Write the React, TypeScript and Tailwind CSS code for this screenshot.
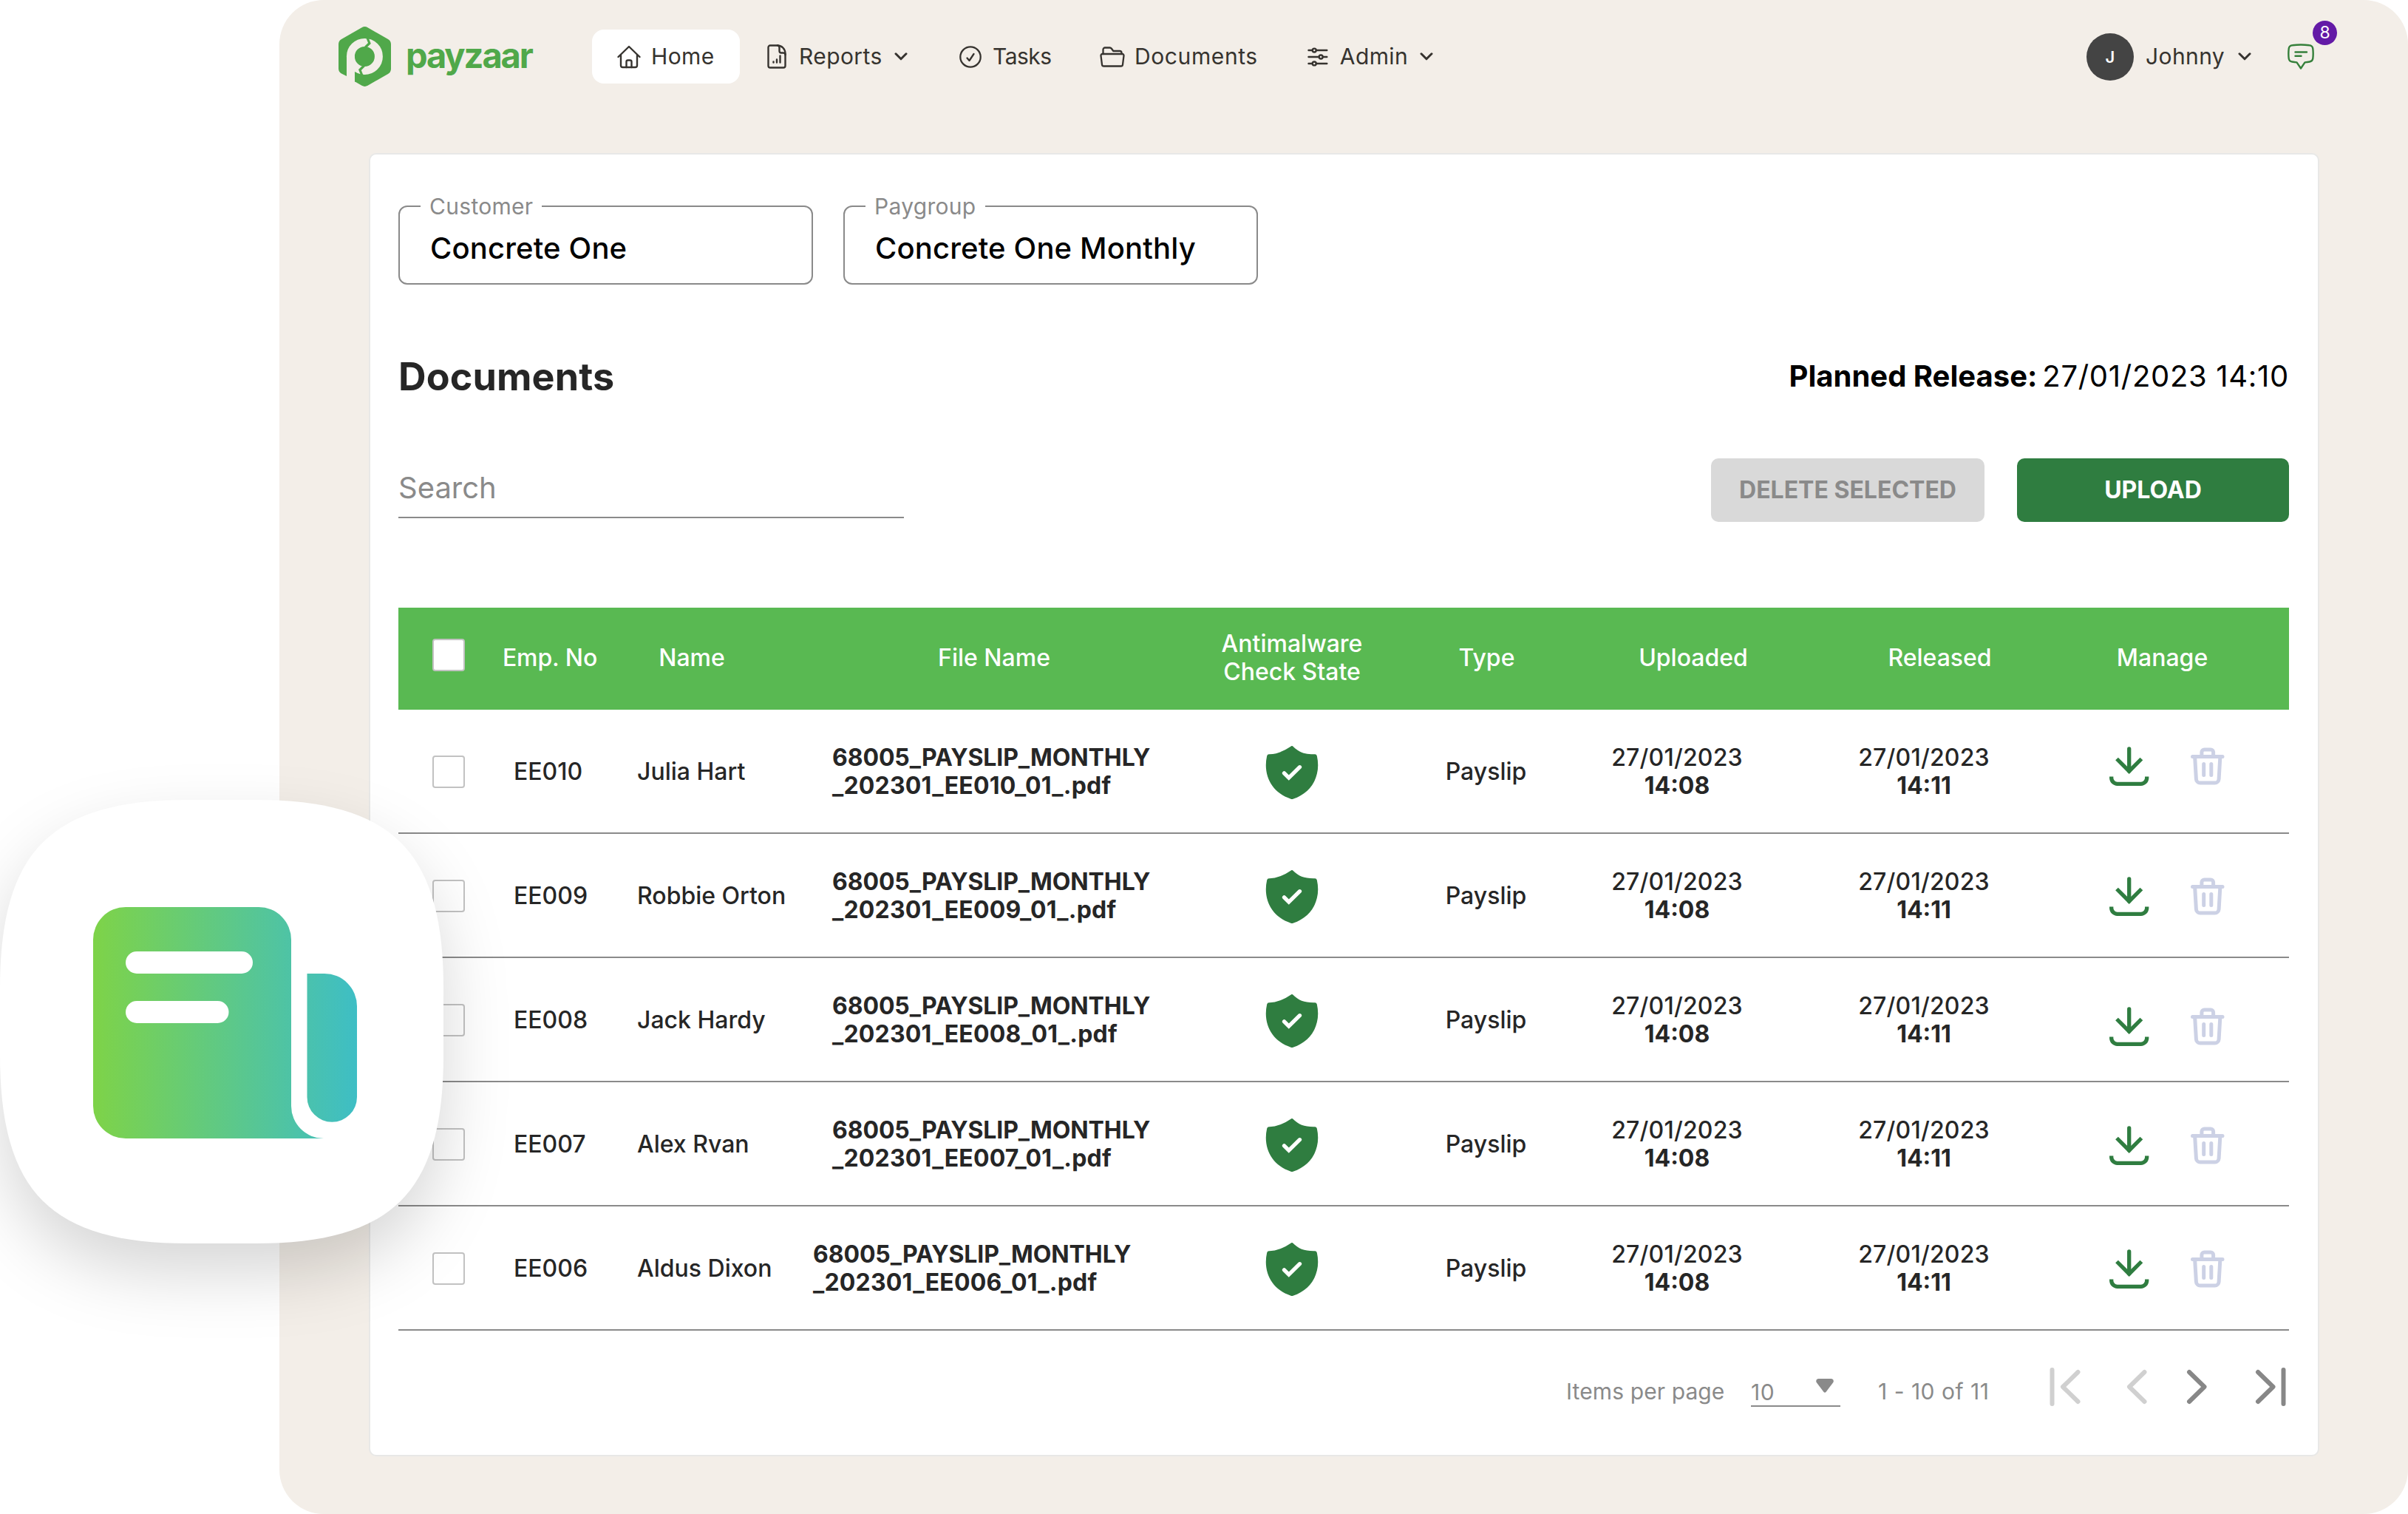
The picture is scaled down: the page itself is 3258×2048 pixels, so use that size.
import React from 'react';

interface DocumentRow {
  empNo: string;
  name: string;
  file: string[];
  fileClass: string;
  manageClass: string;
}

const rows: DocumentRow[] = [
  { empNo: 'EE010', name: 'Julia Hart', file: ['68005_PAYSLIP_MONTHLY', '_202301_EE010_01_.pdf'], fileClass: 'pl-[79px]', manageClass: 'pt-[50px]' },
  { empNo: 'EE009', name: 'Robbie Orton', file: ['68005_PAYSLIP_MONTHLY', '_202301_EE009_01_.pdf'], fileClass: 'pl-[79px]', manageClass: 'pt-[58px]' },
  { empNo: 'EE008', name: 'Jack Hardy', file: ['68005_PAYSLIP_MONTHLY', '_202301_EE008_01_.pdf'], fileClass: 'pl-[79px]', manageClass: 'pt-[66px]' },
  { empNo: 'EE007', name: 'Alex Rvan', file: ['68005_PAYSLIP_MONTHLY', '_202301_EE007_01_.pdf'], fileClass: 'pl-[79px]', manageClass: 'pt-[59px]' },
  { empNo: 'EE006', name: 'Aldus Dixon', file: ['68005_PAYSLIP_MONTHLY', '_202301_EE006_01_.pdf'], fileClass: 'pl-[53px]', manageClass: 'pt-[58px]' },
];

const columns = 'grid grid-cols-[124px_162px_222px_596px_210px_317px_242px_425px_260px]';

const Logo = () => (
  <div className="flex w-[343px] items-center">
    <svg width="71" height="81" viewBox="0 0 71 81" fill="none" className="shrink-0">
      <path
        d="M31.5 1.2a8 8 0 0 1 8 0L67 17a8 8 0 0 1 4 7v33a8 8 0 0 1-4 7L39.5 79.8a8 8 0 0 1-8 0L22 74.3V62l-11 5L4 63.5a8 8 0 0 1-4-7V24a8 8 0 0 1 4-7z"
        fill="#50a84a"
      />
      <path d="M11 40h11v22l-3 8-8 1z" fill="#f3eee8" />
      <circle cx="35.4" cy="40.4" r="19" stroke="#f3eee8" strokeWidth="11" />
      <path d="M22 61.5q5 3 11 4v9H22z" fill="#50a84a" />
      <path d="M38.3 13.5l3.6 9-5.6 5.5M32.5 67.5l-3.6-9 5.6-5.5" stroke="#50a84a" strokeWidth="3.2" />
    </svg>
    <span className="ml-[20px] pb-[4px] text-[47px] leading-[60px] font-bold tracking-[-2.1px] text-[#50a84a]">payzaar</span>
  </div>
);

const Chevron = () => (
  <svg width="18" height="11" viewBox="0 0 18 11" fill="none" stroke="currentColor" strokeWidth="3" className="shrink-0">
    <path d="M2 1.8l7 7 7-7" strokeLinecap="round" strokeLinejoin="round" />
  </svg>
);

const HomeIcon = () => (
  <svg width="32" height="32" viewBox="0 0 32 32" fill="none" stroke="currentColor" strokeWidth="2.4" strokeLinecap="round" strokeLinejoin="round">
    <path d="M1.5 16L16 2l14.5 14M5 13v14.5A2.5 2.5 0 0 0 7.5 30h17a2.5 2.5 0 0 0 2.5-2.5V13" />
    <path d="M12.5 30v-7.5a2 2 0 0 1 2-2h3a2 2 0 0 1 2 2V30" />
  </svg>
);

const ReportIcon = () => (
  <svg width="26" height="33" viewBox="0 0 26 33" fill="none" stroke="currentColor" strokeWidth="2.4" strokeLinecap="round" strokeLinejoin="round">
    <path d="M4 1.5h10c6 0 10.5 5 10.5 11V29a2.5 2.5 0 0 1-2.5 2.5H4A2.5 2.5 0 0 1 1.5 29V4A2.5 2.5 0 0 1 4 1.5z" />
    <path d="M14 1.5c1.5 0 2.5 1.5 2.5 3V9a2.5 2.5 0 0 0 2.5 2.5h2.5c2 0 3 1 3 2.5M8.5 23.5v1M13 20.5v4M17.5 15.5v9" />
  </svg>
);

const TaskIcon = () => (
  <svg width="30" height="30" viewBox="0 0 30 30" fill="none" stroke="currentColor" strokeWidth="2.3" strokeLinecap="round" strokeLinejoin="round">
    <circle cx="15" cy="15" r="13.7" />
    <path d="M10.5 16.5l3 3.5 6-9" />
  </svg>
);

const FolderIcon = () => (
  <svg width="34" height="28" viewBox="0 0 34 28" fill="none" stroke="currentColor" strokeWidth="2.3" strokeLinecap="round" strokeLinejoin="round">
    <path d="M4.5 10V4A2.5 2.5 0 0 1 7 1.5h6.5c1 0 1.8.4 2.4 1.2L18.3 6H27a2.5 2.5 0 0 1 2.5 2.5V10" />
    <path d="M3.5 10h27a2 2 0 0 1 2 2.3l-1.5 12a2.5 2.5 0 0 1-2.5 2.2h-23A2.5 2.5 0 0 1 3 24.3l-1.5-12A2 2 0 0 1 3.5 10z" />
  </svg>
);

const SlidersIcon = () => (
  <svg width="28" height="26" viewBox="0 0 28 26" fill="none" stroke="currentColor" strokeWidth="2.4" strokeLinecap="round">
    <path d="M1.5 4h5M12 4h14.5M1.5 13h14M21 13h5.5M1.5 22h5M12 22h14.5" />
    <circle cx="9.3" cy="4" r="2.5" />
    <circle cx="18.3" cy="13" r="2.5" />
    <circle cx="9.3" cy="22" r="2.5" />
  </svg>
);

const MessageIcon = () => (
  <svg width="36" height="35" viewBox="0 0 36 35" fill="none" stroke="#36803b" strokeWidth="2.4" strokeLinecap="round" strokeLinejoin="round">
    <path d="M6.5 2.2q11.5-1.4 23 0a5 5 0 0 1 4.8 4.6q.8 6.7 0 13.4a5 5 0 0 1-4.3 4.3q-3.2.7-6.5.9L18 33.5l-5.5-8.1q-3.3-.2-6.5-.9a5 5 0 0 1-4.3-4.3q-.8-6.7 0-13.4a5 5 0 0 1 4.8-4.6z" />
    <path d="M10.5 11.5H26M10.5 16.7h8" />
  </svg>
);

const ShieldIcon = () => (
  <svg width="72" height="72" viewBox="0 0 72 72" fill="none">
    <path
      d="M34.8.6a1.6 1.6 0 0 1 2.4 0C45 8.5 53 11.5 67 11.2q2.3 0 2.8 2.3C75.5 39 64 63 37.5 71.7q-1.5.5-3 0C8 63-3.5 39 2.2 13.5Q2.7 11.2 5 11.2 19 11.5 34.8.6z"
      fill="#2f7d40"
    />
    <path d="M25.5 36.800l6.300 6.300 14.700-14.400" stroke="white" strokeWidth="5.3" strokeLinecap="round" />
  </svg>
);

const DownloadIcon = () => (
  <svg width="54" height="54" viewBox="0 0 54 54" fill="none" stroke="#2f7d40" strokeWidth="5.3">
    <path d="M26.7 33V3" strokeLinecap="round" />
    <path d="M10 16.5l16.7 16.7 16.7-16.7M2.7 40.5v1.8a8 8 0 0 0 8 8h32a8 8 0 0 0 8-8v-1.8" />
  </svg>
);

const TrashIcon = () => (
  <svg width="46" height="51" viewBox="0 0 46 51" fill="none" stroke="#ccd1e5" strokeWidth="5" strokeLinecap="round" strokeLinejoin="round">
    <path d="M2.5 12.5H43M14.9 12V6.5A3.5 3.5 0 0 1 18.4 3h8.7a3.5 3.5 0 0 1 3.5 3.5V12" />
    <path d="M5.7 14l1.7 28.8a5.5 5.5 0 0 0 5.5 5.2h19.7a5.5 5.5 0 0 0 5.5-5.2L39.8 14M17.7 22.5v15M27.8 22.5v15" />
  </svg>
);

const SelectField = ({ label, value }: { label: string; value: string }) => (
  <div className="relative flex h-[107px] w-[561px] items-center rounded-[12px] border-2 border-[#8a8a8a] pt-[8px] pl-[41px]">
    <span className="absolute top-[-19px] left-[28px] bg-white px-[12px] text-[30px] leading-[36px] tracking-[0.3px] text-[#8a8a8a]">{label}</span>
    <span className="text-[40px] leading-[48px] font-[450] tracking-[0.15px] text-black">{value}</span>
  </div>
);

const Checkbox = () => <span className="block h-[44px] w-[44px] rounded-[4px] border-2 border-[#c2c2c2] bg-white" />;

// Rounded app tile that overlaps the left edge of the window
const PayslipTile = () => (
  <svg
    width="600"
    height="600"
    viewBox="0 0 600 600"
    className="absolute top-[1082px] left-0 overflow-visible drop-shadow-[0_40px_44px_rgba(0,0,0,0.16)]"
  >
    <defs>
      <linearGradient id="tile" x1="126" y1="0" x2="483" y2="0" gradientUnits="userSpaceOnUse">
        <stop stopColor="#7ed348" />
        <stop offset="1" stopColor="#3ebec5" />
      </linearGradient>
    </defs>
    <path d="M0 255C0 69 69 0 255 0h90c186 0 255 69 255 255v90c0 186-69 255-255 255h-90C69 600 0 531 0 345z" fill="white" />
    <path
      d="M170 145h180a44 44 0 0 1 44 44v225a44 44 0 0 0 44 44H170a44 44 0 0 1-44-44V189a44 44 0 0 1 44-44zM415.5 235H439a44 44 0 0 1 44 44v123a33.75 33.75 0 0 1-67.5 0z"
      fill="url(#tile)"
    />
    <rect x="170" y="205" width="172" height="30" rx="15" fill="white" />
    <rect x="170" y="272" width="139.5" height="30" rx="15" fill="white" />
  </svg>
);

const Header = () => (
  <header className="flex h-[113px] items-center pt-[40px] pl-[80px] text-[30px] leading-[36px] tracking-[0.4px] text-[#36332f]">
    <Logo />
    <nav className="flex items-center">
      <div className="flex h-[73px] w-[200px] items-center rounded-[16px] bg-white pl-[34px]">
        <HomeIcon />
        <span className="ml-[14px] pb-[2px]">Home</span>
      </div>
      <div className="ml-[37px] flex w-[260px] items-center">
        <ReportIcon />
        <span className="ml-[17px] w-[129px] pb-[2px]">Reports</span>
        <Chevron />
      </div>
      <div className="flex w-[190px] items-center">
        <TaskIcon />
        <span className="ml-[15px] pb-[2px] tracking-[-0.5px]">Tasks</span>
      </div>
      <div className="flex w-[281px] items-center">
        <FolderIcon />
        <span className="ml-[13px] pb-[2px] tracking-[0.6px]">Documents</span>
      </div>
      <div className="flex w-[170px] items-center">
        <SlidersIcon />
        <span className="ml-[16px] w-[109px] pb-[2px]">Admin</span>
        <Chevron />
      </div>
    </nav>
    <div className="ml-[884px] flex items-center">
      <span className="flex h-[64px] w-[64px] items-center justify-center rounded-full bg-[#444] text-[22px] leading-none font-semibold tracking-normal text-white">J</span>
      <span className="ml-[16px] w-[125px] pb-[2px]">Johnny</span>
      <Chevron />
      <div className="relative ml-[49px]">
        <MessageIcon />
        <span className="absolute top-[-31px] left-[34px] flex h-[33px] w-[33px] items-center justify-center rounded-full bg-[#631aa6] text-[23px] leading-none tracking-normal text-white">8</span>
      </div>
    </div>
  </header>
);

const TableHeader = () => (
  <div className={`${columns} h-[138px] items-center bg-[#59b952] pb-[3px] text-center text-[32px] leading-[38px] font-medium text-white`}>
    <div className="pb-[8px] pl-[46px]">
      <Checkbox />
    </div>
    <div className="tracking-[-0.1px]">Emp. No</div>
    <div>Name</div>
    <div>File Name</div>
    <div>
      Antimalware
      <br />
      Check State
    </div>
    <div>Type</div>
    <div>Uploaded</div>
    <div>Released</div>
    <div className="pr-[83px]">Manage</div>
  </div>
);

const TableRow = ({ row }: { row: DocumentRow }) => (
  <div className={`${columns} h-[168px] items-center border-b-2 border-[#8a8a8a] text-[32px] leading-[38px] font-medium whitespace-nowrap text-[#262626]`}>
    <div className="pt-[2px] pl-[46px]">
      <Checkbox />
    </div>
    <div className="pt-[2px] pl-[32px]">{row.empNo}</div>
    <div className="pt-[2px] pl-[37px]">{row.name}</div>
    <div className={`pt-[2px] font-bold ${row.fileClass}`}>
      <span className="tracking-[-0.1px]">{row.file[0]}</span>
      <br />
      <span className="tracking-[0.2px]">{row.file[1]}</span>
    </div>
    <div className="flex justify-center pt-[4px]">
      <ShieldIcon />
    </div>
    <div className="pt-[2px] pr-[2px] text-center">Payslip</div>
    <div className="pt-[2px] pr-[44px] text-center">
      <span className="tracking-[0.2px]">27/01/2023</span>
      <br />
      <b>14:08</b>
    </div>
    <div className="pt-[2px] pr-[43px] text-center">
      <span className="tracking-[0.2px]">27/01/2023</span>
      <br />
      <b>14:11</b>
    </div>
    <div className={`flex items-start gap-[56px] self-start pl-[17px] ${row.manageClass}`}>
      <DownloadIcon />
      <div className="pt-[1px]">
        <TrashIcon />
      </div>
    </div>
  </div>
);

const Pagination = () => (
  <div className="flex h-[152px] items-center pl-[1580px] text-[30px] leading-[36px] whitespace-nowrap text-[#8a8a8a]">
    <span className="w-[250px] pt-[11px] tracking-[0.1px]">Items per page</span>
    <div className="mt-[13px] flex h-[40px] w-[121px] items-start justify-between border-b-2 border-[#8a8a8a] pr-[9px]">
      <span className="pt-[2px] tracking-[0.5px]">10</span>
      <svg width="24" height="19" viewBox="0 0 24 19" fill="currentColor" className="mt-[2px]">
        <path d="M3 0h18q4 1 2.3 5L13.5 18q-1.5 1.5-3 0L.7 5Q-1 1 3 0z" />
      </svg>
    </div>
    <span className="ml-[51px] w-[231px] pt-[11px] tracking-[0.5px]">1 - 10 of 11</span>
    <svg width="322" height="54" viewBox="0 0 322 54" fill="none" strokeWidth="6" strokeLinecap="round" strokeLinejoin="round">
      <path d="M4.5 4v46M39.5 7L19 27l20.5 20M129.5 7L109 27l20.5 20" stroke="#d0d0d0" />
      <path d="M190 7l20.5 20L190 47M283 7l20.5 20L283 47M317.5 4v46" stroke="#878787" />
    </svg>
  </div>
);

export default function App() {
  return (
    <div className="relative h-[2048px] w-[3258px] overflow-hidden bg-white font-['Inter',sans-serif]">
      <div className="ml-[378px] h-[2048px] w-[2880px] rounded-[60px] bg-[#f3eee8]">
        <Header />
        <main className="mt-[94px] ml-[121px] h-[1763px] w-[2639px] rounded-[10px] border-2 border-[#e8e8e7] bg-white px-[38px] pt-[69px]">
          <div className="flex gap-[41px]">
            <SelectField label="Customer" value="Concrete One" />
            <SelectField label="Paygroup" value="Concrete One Monthly" />
          </div>

          <div className="mt-[94px] flex h-[60px] w-[2558px] items-center justify-between">
            <h1 className="pt-[2px] text-[52px] leading-[60px] font-bold tracking-[0.15px] text-[#262626]">Documents</h1>
            <p className="flex gap-[7px] text-[40px] leading-[48px] text-black">
              <b>Planned Release:</b>
              <span className="tracking-[0.7px]">27/01/2023 14:10</span>
            </p>
          </div>

          <div className="mt-[81px] flex h-[86px] w-[2558px] items-start">
            <div className="flex h-[81px] w-[684px] items-center border-b-2 border-[#8a8a8a] text-[40px] leading-[48px] text-[#8a8a8a]">Search</div>
            <button className="ml-auto h-[86px] w-[370px] rounded-[10px] bg-[#d9d9d9] text-[32px] leading-[38px] font-bold text-[#8a8a8a]">DELETE SELECTED</button>
            <button className="ml-[44px] h-[86px] w-[368px] rounded-[10px] bg-[#2f7d40] text-[32px] leading-[38px] font-bold text-white">UPLOAD</button>
          </div>

          <div className="mt-[116px] w-[2558px]">
            <TableHeader />
            {rows.map((row) => (
              <TableRow key={row.empNo} row={row} />
            ))}
          </div>

          <Pagination />
        </main>
      </div>
      <PayslipTile />
    </div>
  );
}
